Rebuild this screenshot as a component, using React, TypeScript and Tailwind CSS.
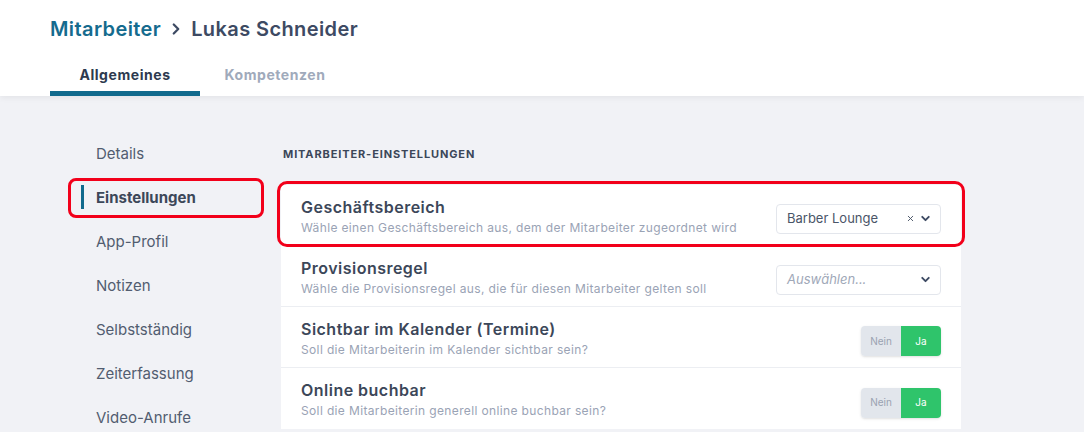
import React from 'react';
import { ChevronRight, ChevronDown, X } from 'lucide-react';

const navItems = ['Details', 'Einstellungen', 'App-Profil', 'Notizen', 'Selbstständig', 'Zeiterfassung', 'Video-Anrufe'];

function Select({ value, placeholder }: { value?: string; placeholder?: string }) {
  return (
    <div className="mt-[7px] flex h-[30px] w-[165px] items-center rounded border border-[#e3e6ec] bg-white pl-[10px] pr-[8px]">
      {value ? (
        <span className="flex-1 text-[13px] text-[#4a5568]">{value}</span>
      ) : (
        <span className="flex-1 text-[13px] italic text-[#a0a8b8]">{placeholder}</span>
      )}
      {value && <X className="mr-[4px] h-[9px] w-[9px] text-[#4a5568]" strokeWidth={2.5} />}
      <ChevronDown className="h-[13px] w-[13px] text-[#3d4a63]" strokeWidth={3.5} />
    </div>
  );
}

function Toggle() {
  return (
    <div className="mt-[8px] flex h-[30px] overflow-hidden rounded text-[10px] shadow-sm">
      <div className="flex w-[40px] items-center justify-center bg-[#e2e6ec] text-[#9aa2b1]">Nein</div>
      <div className="flex w-[40px] items-center justify-center bg-[#2fc46b] text-white">Ja</div>
    </div>
  );
}

function Row({ title, desc, control, highlight }: { title: string; desc: string; control: React.ReactNode; highlight?: boolean }) {
  return (
    <div className="relative flex h-[61px] items-center border-b border-[#eceef2] pl-[20px] pr-[20px] last:border-b-0">
      {highlight && (
        <div className="pointer-events-none absolute -left-[4px] -right-[4px] -top-[4px] bottom-[-2px] rounded-[10px] border-[3px] border-[#f2001a]" />
      )}
      <div className="flex-1 pt-[2px]">
        <div className="text-[16px] font-semibold leading-[20px] tracking-[0.03em] text-[#3c4759]">{title}</div>
        <div className="mt-[3px] text-[12px] leading-[16px] tracking-[0.03em] text-[#9aa3b5]">{desc}</div>
      </div>
      {control}
    </div>
  );
}

export default function App() {
  return (
    <div className="h-[432px] overflow-hidden bg-[#f1f2f6] font-['Inter',sans-serif]">
      <div className="relative bg-white px-[50px] shadow-[0_2px_6px_rgba(0,0,0,0.06)]">
        <div className="flex h-[58px] items-center gap-[6px] text-[20px] font-semibold tracking-[0.02em]">
          <span className="text-[#156b8e]">Mitarbeiter</span>
          <ChevronRight className="h-[18px] w-[18px] text-[#3d4a63]" strokeWidth={3} />
          <span className="text-[#3d4a63]">Lukas Schneider</span>
        </div>
        <div className="flex h-[38px] text-[14px] font-bold tracking-[0.04em]">
          <div className="flex w-[150px] items-center justify-center border-b-[5px] border-[#116a8d] text-[#2d3a4f]">
            Allgemeines
          </div>
          <div className="flex w-[150px] items-center justify-center border-b-[5px] border-transparent text-[#a0aabb]">
            Kompetenzen
          </div>
        </div>
      </div>

      <div className="flex pt-[36px]">
        <div className="w-[231px] pl-[68px]">
          {navItems.map((item) => {
            const active = item === 'Einstellungen';
            return (
              <div key={item} className="relative flex h-[44px] items-center pl-[28px]">
                {active && (
                  <>
                    <div className="absolute left-0 top-[2px] h-[40px] w-[196px] rounded-[8px] border-[3px] border-[#f2001a]" />
                    <div className="absolute left-[13px] top-[9px] h-[24px] w-[3px] bg-[#116a8d]" />
                  </>
                )}
                <span className={active ? 'text-[15px] font-bold text-[#3c4759]' : 'text-[15px] text-[#525d70]'}>{item}</span>
              </div>
            );
          })}
        </div>

        <div className="ml-[50px] w-[680px]">
          <div className="flex h-[44px] items-center pl-[2px] text-[11px] font-bold tracking-[0.08em] text-[#3c4759]">
            MITARBEITER-EINSTELLUNGEN
          </div>
          <div className="mt-[9px] bg-white">
            <Row
              highlight
              title="Geschäftsbereich"
              desc="Wähle einen Geschäftsbereich aus, dem der Mitarbeiter zugeordnet wird"
              control={<Select value="Barber Lounge" />}
            />
            <Row
              title="Provisionsregel"
              desc="Wähle die Provisionsregel aus, die für diesen Mitarbeiter gelten soll"
              control={<Select placeholder="Auswählen..." />}
            />
            <Row
              title="Sichtbar im Kalender (Termine)"
              desc="Soll die Mitarbeiterin im Kalender sichtbar sein?"
              control={<Toggle />}
            />
            <Row
              title="Online buchbar"
              desc="Soll die Mitarbeiterin generell online buchbar sein?"
              control={<Toggle />}
            />
          </div>
        </div>
      </div>
    </div>
  );
}
